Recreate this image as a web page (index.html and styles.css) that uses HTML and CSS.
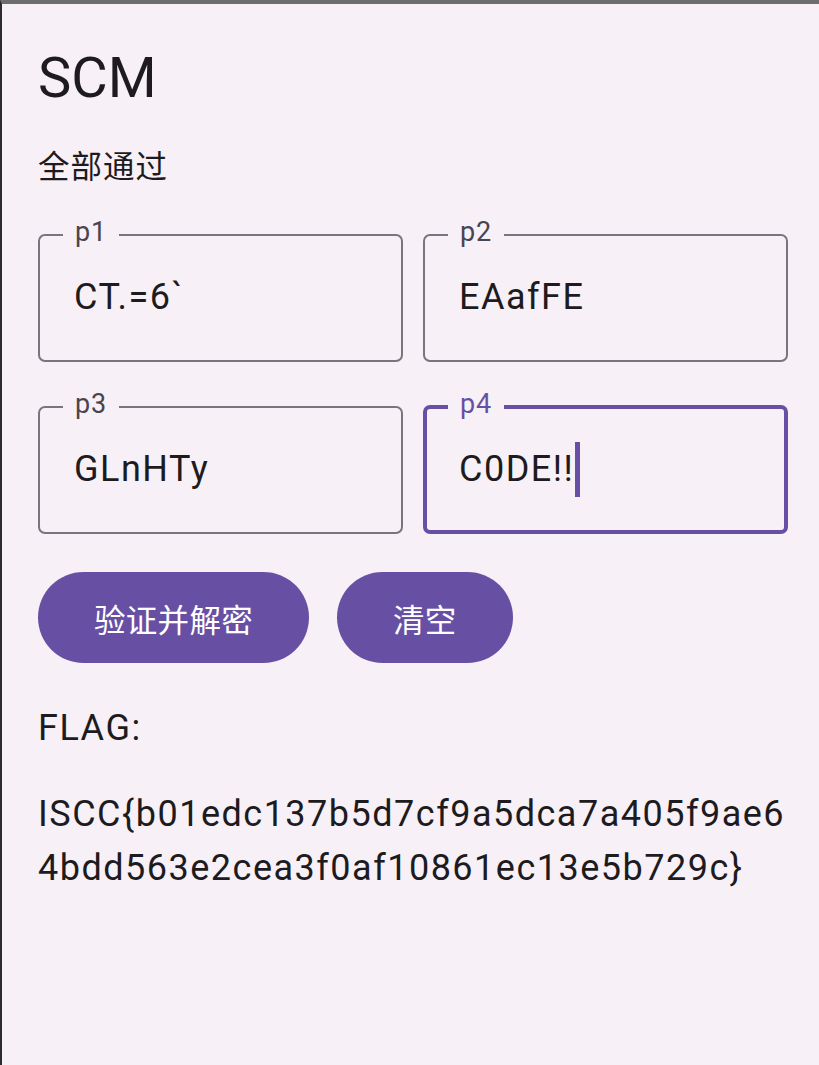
FILE: index.html
```html
<!DOCTYPE html>
<html lang="zh-CN">
<head>
    <meta charset="UTF-8">
    <meta name="viewport" content="width=device-width, initial-scale=1.0">
    <title>SCM</title>
    <link rel="stylesheet" href="styles.css">
</head>
<body>
    <main class="screen">
        <h1 class="title">SCM</h1>
        <p class="status">全部通过</p>

        <div class="fields">
            <fieldset class="field">
                <legend>p1</legend>
                <div class="field-value">CT.=6`</div>
            </fieldset>
            <fieldset class="field">
                <legend>p2</legend>
                <div class="field-value">EAafFE</div>
            </fieldset>
            <fieldset class="field">
                <legend>p3</legend>
                <div class="field-value">GLnHTy</div>
            </fieldset>
            <fieldset class="field field-focused">
                <legend>p4</legend>
                <div class="field-value">C0DE!!<span class="caret"></span></div>
            </fieldset>
        </div>

        <div class="actions">
            <button type="button" class="btn">验证并解密</button>
            <button type="button" class="btn">清空</button>
        </div>

        <p class="flag-label">FLAG:</p>
        <p class="flag-value">ISCC{b01edc137b5d7cf9a5dca7a405f9ae64bdd563e2cea3f0af10861ec13e5b729c}</p>
    </main>
</body>
</html>
```

FILE: styles.css
```css
:root {
    --primary-color: #6750a4;
    --surface-color: #f7f0f7;
    --text-color: #1d1b20;
    --label-color: #49454f;
    --outline-color: #79747e;
}

* {
    box-sizing: border-box;
    margin: 0;
    padding: 0;
}

html, body {
    height: 100%;
}

body {
    background-color: var(--surface-color);
    color: var(--text-color);
    font-family: Roboto, "Noto Sans CJK SC", sans-serif;
    border-top: 4px solid #6d6d6d;
    border-left: 2px solid #2b2b2f;
}

.screen {
    padding: 38px 31px 0 36px;
}

.title {
    font-size: 56px;
    font-weight: 400;
    line-height: 72px;
}

.status {
    font-size: 31.5px;
    line-height: 44px;
    letter-spacing: 1px;
    margin-top: 32px;
}

.fields {
    display: grid;
    grid-template-columns: 1fr 1fr;
    column-gap: 20px;
    row-gap: 30px;
    margin-top: 30px;
}

.field {
    border: 2px solid var(--outline-color);
    border-radius: 7px;
    padding: 0 0 39px 0;
    min-width: 0;
}

.field legend {
    margin-left: 23px;
    padding: 0 12px 6px 12px;
    font-size: 27px;
    line-height: 24px;
    letter-spacing: 0.9px;
    color: var(--label-color);
}

.field-value {
    padding: 23px 0 0 34px;
    font-size: 36px;
    line-height: 48px;
    letter-spacing: 1.5px;
    white-space: nowrap;
}

.field-focused {
    border: 4px solid var(--primary-color);
    padding-bottom: 37px;
}

.field-focused legend {
    margin-left: 21px;
    color: var(--primary-color);
}

.field-focused .field-value {
    padding-left: 32px;
}

.caret {
    display: inline-block;
    width: 4.5px;
    height: 55px;
    margin: -8px 0 -8px 1px;
    vertical-align: -8px;
    background-color: var(--primary-color);
}

.actions {
    display: flex;
    gap: 28px;
    margin-top: 38px;
}

.btn {
    height: 91px;
    padding: 0 56px;
    border: none;
    border-radius: 46px;
    background-color: var(--primary-color);
    color: white;
    font-family: Roboto, "Noto Sans CJK SC", sans-serif;
    font-size: 31.5px;
    letter-spacing: 0.3px;
    cursor: pointer;
}

.flag-label,
.flag-value {
    font-size: 36px;
    line-height: 54px;
    letter-spacing: 1.5px;
}

.flag-label {
    margin-top: 38px;
}

.flag-value {
    margin-top: 32px;
    word-break: break-all;
}
```
